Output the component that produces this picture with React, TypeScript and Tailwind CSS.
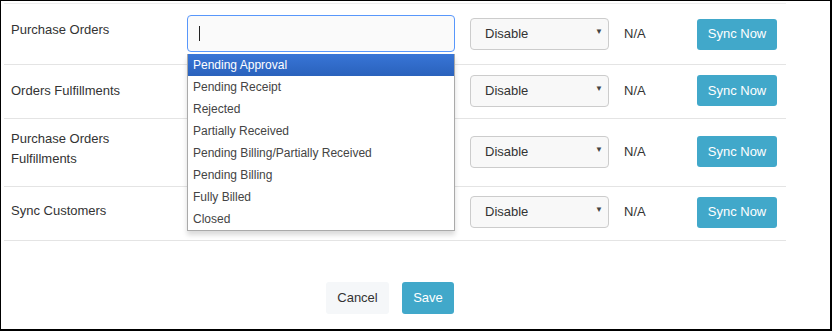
import { useState } from "react";

const statuses = [
  "Pending Approval",
  "Pending Receipt",
  "Rejected",
  "Partially Received",
  "Pending Billing/Partially Received",
  "Pending Billing",
  "Fully Billed",
  "Closed",
];

type Row = { label: string[]; height: string; labelOffset: string; shift: string; input?: boolean };

const rows: Row[] = [
  { label: ["Purchase Orders"], height: "h-[61px]", labelOffset: "-mt-[8px]", shift: "", input: true },
  { label: ["Orders Fulfillments"], height: "h-[54px]", labelOffset: "-mt-[2px]", shift: "-mt-[2px]" },
  { label: ["Purchase Orders", "Fulfillments"], height: "h-[68px]", labelOffset: "-mt-[8px]", shift: "-mt-[2px]" },
  { label: ["Sync Customers"], height: "h-[54px]", labelOffset: "-mt-[6px]", shift: "-mt-[3px]" },
];

function SelectBox() {
  return (
    <div className="relative w-[139px] h-[32px] rounded-[4px] border border-[#ccc] bg-[#f8f8f8] flex items-center pl-[14px] text-[13px] text-[#333]">
      Disable
      <span className="absolute right-[3px] top-[9px] text-[8px] text-[#444] leading-none w-[10px]">▼</span>
    </div>
  );
}

export default function App() {
  const [active] = useState(0);

  return (
    <div
      className="w-[832px] h-[331px] bg-white border-l border-t border-r-2 border-b-2 border-black text-[#333] overflow-hidden"
      style={{ fontFamily: '"Liberation Sans", Arial, sans-serif' }}
    >
      <div className="ml-[3px] mt-[2px] w-[782px] border-t border-[#eee]">
        {rows.map((row, i) => (
          <div key={i} className={`relative flex items-center border-b border-[#e4e4e4] ${row.height}`}>
            <div className={`w-[183px] pl-[7px] text-[13px] leading-[20px] ${row.labelOffset}`}>
              {row.label.map((l) => (
                <div key={l}>{l}</div>
              ))}
            </div>
            <div className="w-[268px] shrink-0">
              {row.input && (
                <div className="relative h-[37px] -mt-[2px] rounded-[4px] border border-[#5897fb] bg-[#fafafa] flex items-center pl-[11px]">
                  <span className="w-px h-[15px] bg-[#222]" />
                  <div className="absolute left-[-1px] top-[38px] w-[268px] bg-white border border-[#aaa] border-t-0 shadow-[0_4px_5px_rgba(0,0,0,0.15)] z-10">
                    {statuses.map((s, j) => (
                      <div
                        key={s}
                        className={`h-[22px] flex items-center pl-[5px] text-[12px] ${
                          j === active
                            ? "bg-gradient-to-b from-[#3875d7] to-[#2a62bc] text-white"
                            : "text-[#444]"
                        }`}
                      >
                        {s}
                      </div>
                    ))}
                  </div>
                </div>
              )}
            </div>
            <div className={`ml-[15px] flex items-center ${row.shift}`}>
              <SelectBox />
              <div className="w-[88px] pl-[15px] text-[13px]">N/A</div>
              <button className="w-[80px] h-[31px] rounded-[3px] bg-[#41a8ca] text-white text-[13px]">
                Sync Now
              </button>
            </div>
          </div>
        ))}
      </div>
      <div className="flex justify-center gap-[13px] mt-[41px] pr-[51px]">
        <button className="w-[63px] h-[32px] rounded-[3px] bg-[#f5f7f9] text-[13px] text-[#333]">
          Cancel
        </button>
        <button className="w-[52px] h-[32px] rounded-[3px] bg-[#41a8ca] text-white text-[13px]">
          Save
        </button>
      </div>
    </div>
  );
}
